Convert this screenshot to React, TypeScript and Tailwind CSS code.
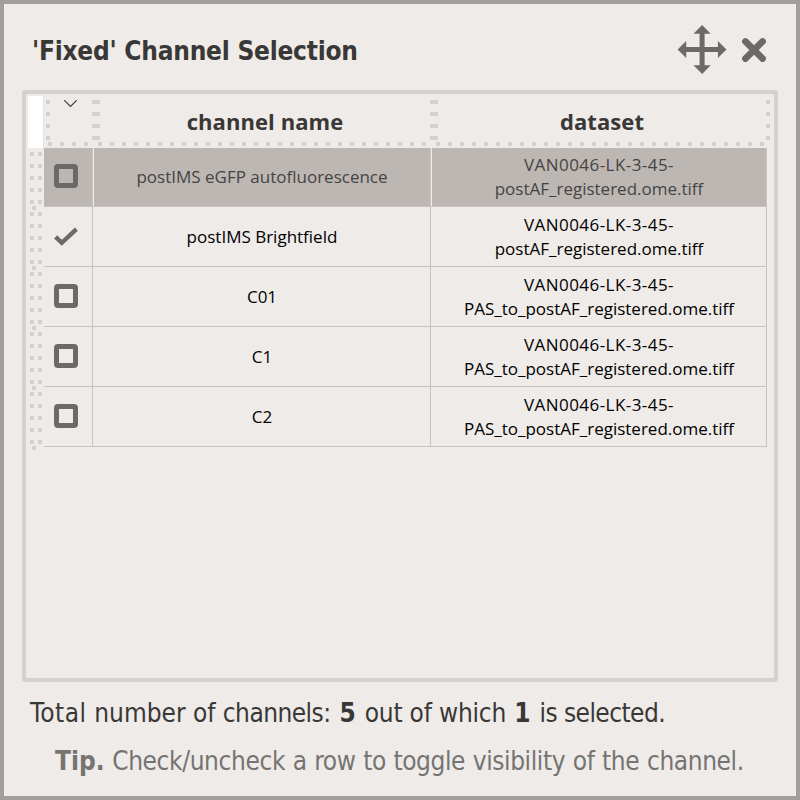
type Channel = { name: string; lines: [string, string]; checked: boolean; active?: boolean };

const POST_AF: [string, string] = ['VAN0046-LK-3-45-', 'postAF_registered.ome.tiff'];
const PAS: [string, string] = ['VAN0046-LK-3-45-', 'PAS_to_postAF_registered.ome.tiff'];

const channels: Channel[] = [
  { name: 'postIMS eGFP autofluorescence', lines: POST_AF, checked: false, active: true },
  { name: 'postIMS Brightfield', lines: POST_AF, checked: true },
  { name: 'C01', lines: PAS, checked: false },
  { name: 'C1', lines: PAS, checked: false },
  { name: 'C2', lines: PAS, checked: false },
];

function MoveIcon() {
  return (
    <svg className="h-[50px] w-[50px]" viewBox="0 0 50 50" fill="#6b6a67">
      <path d="M25.1 0 33.7 8.8H27.6V22H40.9V15.9L49.5 24.5 40.9 33.1V27H27.6V40.2H33.7L25.1 49 16.5 40.2H22.6V27H9.2V33.1L.6 24.5 9.2 15.9V22H22.6V8.8H16.5Z" />
    </svg>
  );
}

function CloseIcon() {
  return (
    <svg className="h-[26px] w-[26px]" viewBox="0 0 26 26" fill="none" stroke="#6b6a67" strokeWidth="6.6" strokeLinecap="round">
      <path d="M4.4 4.4 21.6 21.6M21.6 4.4 4.4 21.6" />
    </svg>
  );
}

function Mark({ checked }: { checked: boolean }) {
  if (!checked) return <span className="h-6 w-6 rounded-[4px] border-[5px] border-[#6b6a67]" />;
  return (
    <svg className="h-6 w-6" viewBox="0 0 24 24" fill="none" stroke="#6b6a67" strokeWidth="4.4">
      <path d="M1.6 12.8 7.8 18.8 22.4 5.2" />
    </svg>
  );
}

function VerticalDots({ className }: { className: string }) {
  return <div className={`shrink-0 bg-[repeating-linear-gradient(to_bottom,#d6d1ce_0px,#d6d1ce_4px,transparent_4px,transparent_12px)] ${className}`} />;
}

function HorizontalDots({ className }: { className: string }) {
  return <div className={`h-1 shrink-0 bg-[repeating-linear-gradient(to_right,#d6d1ce_0px,#d6d1ce_4px,transparent_4px,transparent_12px)] ${className}`} />;
}

function TableHeader() {
  return (
    <div className="flex h-[52px]">
      <div className="w-[15px] shrink-0 bg-white" />
      <div className="w-px shrink-0 bg-[#e6e2df]" />
      <div className="flex flex-col">
        <div className="flex h-[46px] pt-1 pl-[2px] text-[22px] leading-[30px] font-bold tracking-[0.08px]">
          <VerticalDots className="h-10 w-1" />
          <div className="w-[42px] shrink-0 pl-[14px]">
            <svg className="h-2 w-[14px]" viewBox="0 0 14 8" fill="none" stroke="#393836" strokeWidth="1.1">
              <path d="M.3.3 6.5 6.5 12.7.3" />
            </svg>
          </div>
          <VerticalDots className="h-10 w-2" />
          <div className="w-[330px] shrink-0 pt-[6px] text-center">channel name</div>
          <VerticalDots className="h-10 w-2" />
          <div className="w-[328px] shrink-0 pt-[6px] text-center">dataset</div>
          <VerticalDots className="h-10 w-1" />
        </div>
        <div className="flex gap-[10px] pl-1">
          <HorizontalDots className="w-10" />
          <HorizontalDots className="w-[328px]" />
          <HorizontalDots className="w-[328px]" />
        </div>
      </div>
    </div>
  );
}

function Row({ channel }: { channel: Channel }) {
  const { name, lines, checked, active } = channel;
  const tone = active ? 'h-[59px] bg-[#bdb7b4] text-[#464442]' : 'h-[60px] text-black';
  const divider = active ? 'shadow-[1px_0_0_#efebe8]' : '';
  return (
    <div className={`flex border-b border-[#c8c3c0] ${tone}`}>
      <div className={`flex w-[49px] items-end border-r border-[#c8c3c0] pb-[18px] pl-[10px] ${divider}`}>
        <Mark checked={checked} />
      </div>
      <div className={`flex w-[338px] items-end justify-center border-r border-[#c8c3c0] pb-[17px] pl-px ${divider}`}>{name}</div>
      <div className="flex w-[336px] flex-col items-center justify-end border-r border-[#c8c3c0] pb-[5px] pl-px">
        <span className="tracking-[0.45px]">{lines[0]}</span>
        <span>{lines[1]}</span>
      </div>
    </div>
  );
}

export default function App() {
  return (
    <div className="flex h-[800px] w-[800px] flex-col overflow-hidden border-4 border-[#a39e99] bg-[#efebe8] font-['DejaVu_Sans_Condensed','DejaVu_Sans',sans-serif] text-[26px] leading-[30px] text-[#393836]">
      <header className="flex h-[86px] shrink-0 items-start justify-between pr-[29px] pl-[28px]">
        <h1 className="pt-8 font-bold tracking-[-0.23px]">'Fixed' Channel Selection</h1>
        <div className="flex items-center gap-[14px] pt-[21px]">
          <MoveIcon />
          <CloseIcon />
        </div>
      </header>

      <section className="mx-[18px] h-[592px] shrink-0 rounded-[3px] border-4 border-[#d6d1ce] pt-[2px] pl-[2px] font-['Open_Sans','Noto_Sans',sans-serif]">
        <TableHeader />
        <div className="flex text-[17px] leading-6">
          <div className="flex w-4 shrink-0 flex-col pt-[2px] pl-[2px]">
            {channels.map((c) => (
              <div key={c.name} className="flex h-[60px] flex-col gap-[2px] pt-[2px]">
                <div className="flex gap-1">
                  <VerticalDots className="h-[52px] w-1" />
                  <VerticalDots className="h-[52px] w-1" />
                </div>
                <div className="ml-[2px] h-1 w-1 bg-[#d6d1ce]" />
              </div>
            ))}
          </div>
          <div className="flex flex-col">
            {channels.map((c) => (
              <Row key={c.name} channel={c} />
            ))}
          </div>
        </div>
      </section>

      <p className="mt-4 pl-[26px] whitespace-pre">
        <span className="tracking-[0.45px]">Total </span>
        <span className="tracking-[-0.02px]">number of </span>
        <span className="tracking-[-0.55px]">channels:</span>
        <span className="tracking-[1.6px]"> </span>
        <b>5</b>
        <span className="tracking-[1.4px]"> </span>
        <span className="tracking-[-0.2px]">out of which</span>
        <span className="tracking-[0.6px]"> </span>
        <b>1</b>
        <span className="tracking-[1.6px]"> </span>
        <span className="tracking-[-0.55px]">is selected.</span>
      </p>
      <p className="mt-[18px] pl-[51px] whitespace-pre text-[#757472]">
        <b>Tip.</b>
        <span className="tracking-[-0.4px] [word-spacing:0.6px]"> Check/uncheck a row to toggle visibility of the channel.</span>
      </p>
    </div>
  );
}
